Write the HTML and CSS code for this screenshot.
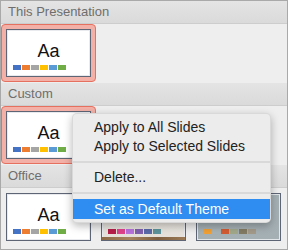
FILE: index.html
```html
<!DOCTYPE html>
<html lang="en">
<head>
<meta charset="UTF-8">
<title>Themes</title>
<link rel="stylesheet" href="styles.css">
</head>
<body>

<div class="panel">

  <div class="group-head">This Presentation</div>
  <div class="thumb-row">
    <div class="picked">
      <div class="slide">
        <div class="aa">Aa</div>
        <div class="swatches office">
          <span></span><span></span><span></span><span></span><span></span><span></span>
        </div>
      </div>
    </div>
  </div>

  <div class="group-head">Custom</div>
  <div class="thumb-row">
    <div class="picked">
      <div class="slide">
        <div class="aa">Aa</div>
        <div class="swatches office">
          <span></span><span></span><span></span><span></span><span></span><span></span>
        </div>
      </div>
    </div>
  </div>

  <div class="group-head">Office</div>
  <div class="thumb-row plain">
    <div class="slide">
      <div class="aa">Aa</div>
      <div class="swatches office">
        <span></span><span></span><span></span><span></span><span></span><span></span>
      </div>
    </div>
    <div class="slide wood">
      <div class="aa serif">Aa</div>
      <div class="swatches berry">
        <span></span><span></span><span></span><span></span><span></span><span></span>
      </div>
      <div class="plank"></div>
    </div>
    <div class="slide slate">
      <div class="aa serif">Aa</div>
      <div class="swatches rust">
        <span></span><span></span><span></span><span></span><span></span><span></span>
      </div>
    </div>
  </div>

  <!-- context menu over the Custom theme -->
  <div class="menu">
    <div class="menu-item">Apply to All Slides</div>
    <div class="menu-item">Apply to Selected Slides</div>
    <div class="menu-sep"></div>
    <div class="menu-item">Delete...</div>
    <div class="menu-sep"></div>
    <div class="menu-item active">Set as Default Theme</div>
  </div>

</div>

</body>
</html>
```

FILE: styles.css
```css
body, html {
  margin: 0;
  padding: 0;
}

.panel {
  position: relative;
  width: 288px;
  height: 250px;
  box-sizing: border-box;
  border: 1px solid #a9a9a9;
  background-color: #eeeeee;
  font-family: "Liberation Sans", Arial, sans-serif;
  overflow: hidden;
}

.group-head {
  height: 22px;
  line-height: 22px;
  padding-left: 7px;
  font-size: 13px;
  color: #6e6e6e;
  background: linear-gradient(#e4e4e4, #dadada);
  border-bottom: 1px solid #cdcdcd;
}

.thumb-row {
  display: flex;
  height: 59px;
}

.thumb-row.plain {
  height: auto;
  padding: 5px 0 0 5px;
  gap: 10px;
}

/* rood kader rond gekozen thema */
.picked {
  padding: 4px;
  height: 48px;
  background-color: #f2b0a7;
  border: 1px solid #e6705f;
  border-radius: 4px;
}

.slide {
  width: 85px;
  height: 48px;
  box-sizing: border-box;
  padding: 11px 6px 0;
  background-color: #ffffff;
  border: 1px solid #5e6575;
  box-shadow: inset 0 0 0 1px #e8eaee;
}

.aa {
  height: 21px;
  line-height: 21px;
  text-align: center;
  font-size: 18px;
  color: #111111;
}

.aa.serif {
  font-family: "Liberation Serif", serif;
  font-weight: bold;
  color: #2a2a2a;
}

.swatches {
  display: flex;
  gap: 1px;
  margin-top: 3px;
}

.swatches span {
  width: 8px;
  height: 5px;
}

.office span:nth-child(1) { background-color: #4472c4; }
.office span:nth-child(2) { background-color: #ed7d31; }
.office span:nth-child(3) { background-color: #a5a5a5; }
.office span:nth-child(4) { background-color: #ffc000; }
.office span:nth-child(5) { background-color: #5b9bd5; }
.office span:nth-child(6) { background-color: #70ad47; }

.berry span:nth-child(1) { background-color: #b71e4a; }
.berry span:nth-child(2) { background-color: #e0438a; }
.berry span:nth-child(3) { background-color: #b872dc; }
.berry span:nth-child(4) { background-color: #7f5fae; }
.berry span:nth-child(5) { background-color: #5969a8; }
.berry span:nth-child(6) { background-color: #5c939c; }

.rust span:nth-child(1) { background-color: #f0a035; }
.rust span:nth-child(2) { background-color: #a7b2b6; }
.rust span:nth-child(3) { background-color: #d25c33; }
.rust span:nth-child(4) { background-color: #a1a88a; }
.rust span:nth-child(5) { background-color: #837a62; }
.rust span:nth-child(6) { background-color: #a39a8a; }

.slide.wood {
  background: linear-gradient(#f2f0ec, #e4dfd8);
}

.plank {
  height: 3px;
  margin: 3px -6px 0;
  background: linear-gradient(90deg, #8c6a48, #a6845e, #7e5e40, #9c7a56);
}

.slide.slate {
  background-color: #a9b4b9;
  background-image: radial-gradient(#9ea9ae 0.6px, transparent 0.8px);
  background-size: 2px 2px;
  box-shadow: inset 0 0 0 1px #e2e6e8;
}

/* contextmenu */
.menu {
  position: absolute;
  left: 71px;
  top: 112px;
  width: 197px;
  padding: 4px 0 3px;
  background-color: #ececec;
  border: 1px solid rgba(0, 0, 0, 0.08);
  border-radius: 5px;
  box-shadow: 0 3px 9px rgba(0, 0, 0, 0.28);
  font-size: 14px;
  color: #222222;
}

.menu-item {
  height: 19px;
  line-height: 19px;
  padding-left: 21px;
  white-space: nowrap;
}

.menu-item.active {
  height: 20px;
  line-height: 20px;
  background-color: #2f8cf0;
  color: #ffffff;
}

.menu-sep {
  height: 2px;
  margin: 5px 0;
  background-color: #d9d9d9;
}
```
